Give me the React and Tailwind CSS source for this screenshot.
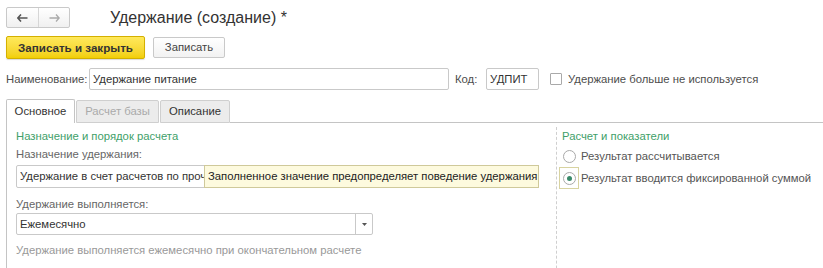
import React from 'react';

const font = { fontFamily: '"Liberation Sans", Arial, sans-serif' };

const App = () => {
    return (
        <div className="w-[823px] h-[268px] bg-white overflow-hidden text-[11.3px] text-[#4d4d4d]" style={font}>
            <div className="pl-[6px] pt-[7px]">
                {/* Header */}
                <div className="flex items-center h-[21px]">
                    <div className="flex h-[21px] w-[64px] border border-[#c9c9c9] rounded-[2px] bg-gradient-to-b from-white to-[#f0f0f0]">
                        <div className="w-[32px] flex items-center justify-center border-r border-[#d6d6d6]">
                            <svg width="11" height="8" viewBox="0 0 11 8">
                                <path d="M4 0.5 L0.8 4 L4 7.5 M1 4 H10.5" stroke="#555" strokeWidth="1.6" fill="none" />
                            </svg>
                        </div>
                        <div className="flex-1 flex items-center justify-center">
                            <svg width="11" height="8" viewBox="0 0 11 8">
                                <path d="M7 0.5 L10.2 4 L7 7.5 M10 4 H0.5" stroke="#aaa" strokeWidth="1.3" fill="none" />
                            </svg>
                        </div>
                    </div>
                    <h1 className="ml-[40px] text-[16px] text-[#333] leading-none">Удержание (создание) *</h1>
                </div>

                {/* Command bar */}
                <div className="flex items-center gap-[8px] mt-[8px]">
                    <button className="h-[23px] w-[139px] rounded-[2px] border border-[#d4b000] bg-gradient-to-b from-[#ffe95a] to-[#f2cf00] text-[#333] text-[11.6px] font-bold shadow-[0_1px_1px_rgba(0,0,0,0.15)]">
                        Записать и закрыть
                    </button>
                    <button className="h-[21px] w-[72px] rounded-[2px] border border-[#c9c9c9] bg-gradient-to-b from-white to-[#f2f2f2] text-[#444] text-[11.3px]">
                        Записать
                    </button>
                </div>

                {/* Name row */}
                <div className="flex items-center mt-[9px] h-[22px]">
                    <span className="w-[83px]">Наименование:</span>
                    <div className="w-[360px] h-[22px] border border-[#c9c9c9] rounded-[2px] px-[3px] flex items-center text-[#333]">
                        Удержание питание
                    </div>
                    <span className="ml-[6px] w-[31px]">Код:</span>
                    <div className="w-[53px] h-[22px] border border-[#c9c9c9] rounded-[2px] px-[3px] flex items-center text-[#333]">
                        УДПИТ
                    </div>
                    <div className="ml-[11px] w-[12px] h-[12px] border border-[#a9a9a9] rounded-[1px] bg-white"></div>
                    <span className="ml-[6px]">Удержание больше не используется</span>
                </div>

                {/* Tabs */}
                <div className="flex items-end mt-[9px] h-[24px]">
                    <div className="h-[24px] w-[69px] border border-b-0 border-[#c4c4c4] bg-white flex items-center justify-center text-[#333] rounded-t-[2px]">
                        Основное
                    </div>
                    <div className="h-[23px] w-[83px] ml-[1px] border border-[#cfcfcf] bg-[#ececec] flex items-center justify-center text-[#aaa] rounded-t-[2px]">
                        Расчет базы
                    </div>
                    <div className="h-[23px] w-[70px] ml-[1px] border border-[#cfcfcf] bg-[#ececec] flex items-center justify-center text-[#333] rounded-t-[2px]">
                        Описание
                    </div>
                    <div className="flex-1 border-b border-[#c4c4c4]"></div>
                </div>

                {/* Tab content */}
                <div className="flex border-l border-[#c4c4c4] h-[200px]">
                    <div className="w-[549px] pl-[9px] pt-[6px] flex flex-col">
                        <div className="text-[#3f9f6a] leading-[14px]">Назначение и порядок расчета</div>
                        <div className="mt-[4px] leading-[14px] text-[#666]">Назначение удержания:</div>
                        <div className="relative mt-[4px] w-[357px] h-[23px]">
                            <div className="w-[357px] h-[23px] border border-[#c9c9c9] rounded-[2px] pl-[3px] flex items-center text-[#333]">
                                <span className="block w-[184px] whitespace-nowrap overflow-hidden">Удержание в счет расчетов по прочим операциям</span>
                            </div>
                            {/* tooltip */}
                            <div className="absolute left-[188px] top-0 h-[23px] w-[335px] border border-[#cfc99a] bg-[#fdfade] text-[#222] flex items-center px-[3px] whitespace-nowrap">
                                Заполненное значение предопределяет поведение удержания
                            </div>
                        </div>
                        <div className="mt-[9px] leading-[14px] text-[#666]">Удержание выполняется:</div>
                        <div className="mt-[2px] w-[357px] h-[22px] border border-[#c9c9c9] rounded-[2px] flex text-[#333]">
                            <div className="flex-1 px-[3px] flex items-center">Ежемесячно</div>
                            <div className="w-[17px] border-l border-[#c9c9c9] flex items-center justify-center">
                                <svg width="5" height="3" viewBox="0 0 5 3"><path d="M0 0 H5 L2.5 3 Z" fill="#555" /></svg>
                            </div>
                        </div>
                        <div className="mt-[8px] text-[#999] leading-[14px]">Удержание выполняется ежемесячно при окончательном расчете</div>
                    </div>
                    <div className="mt-[4px] border-l border-dashed border-[#cfcfcf] pl-[5px] pt-[2px] flex flex-col">
                        <div className="text-[#3f9f6a] leading-[14px]">Расчет и показатели</div>
                        <div className="flex items-center mt-[6px] h-[14px]">
                            <div className="ml-[1px] w-[13px] h-[13px] rounded-full border border-[#a9a9a9] bg-white"></div>
                            <span className="ml-[5px] text-[#555]">Результат рассчитывается</span>
                        </div>
                        <div className="flex items-center mt-[4px]">
                            <div className="-ml-[3px] w-[20px] h-[22px] border border-[#d8d3a0] flex items-center justify-center">
                                <div className="w-[13px] h-[13px] rounded-full border border-[#a9a9a9] bg-white flex items-center justify-center">
                                    <div className="w-[5px] h-[5px] rounded-full bg-[#3a8a6a]"></div>
                                </div>
                            </div>
                            <span className="ml-[2px] text-[#555]">Результат вводится фиксированной суммой</span>
                        </div>
                    </div>
                </div>
            </div>
        </div>
    );
};

export default App;
